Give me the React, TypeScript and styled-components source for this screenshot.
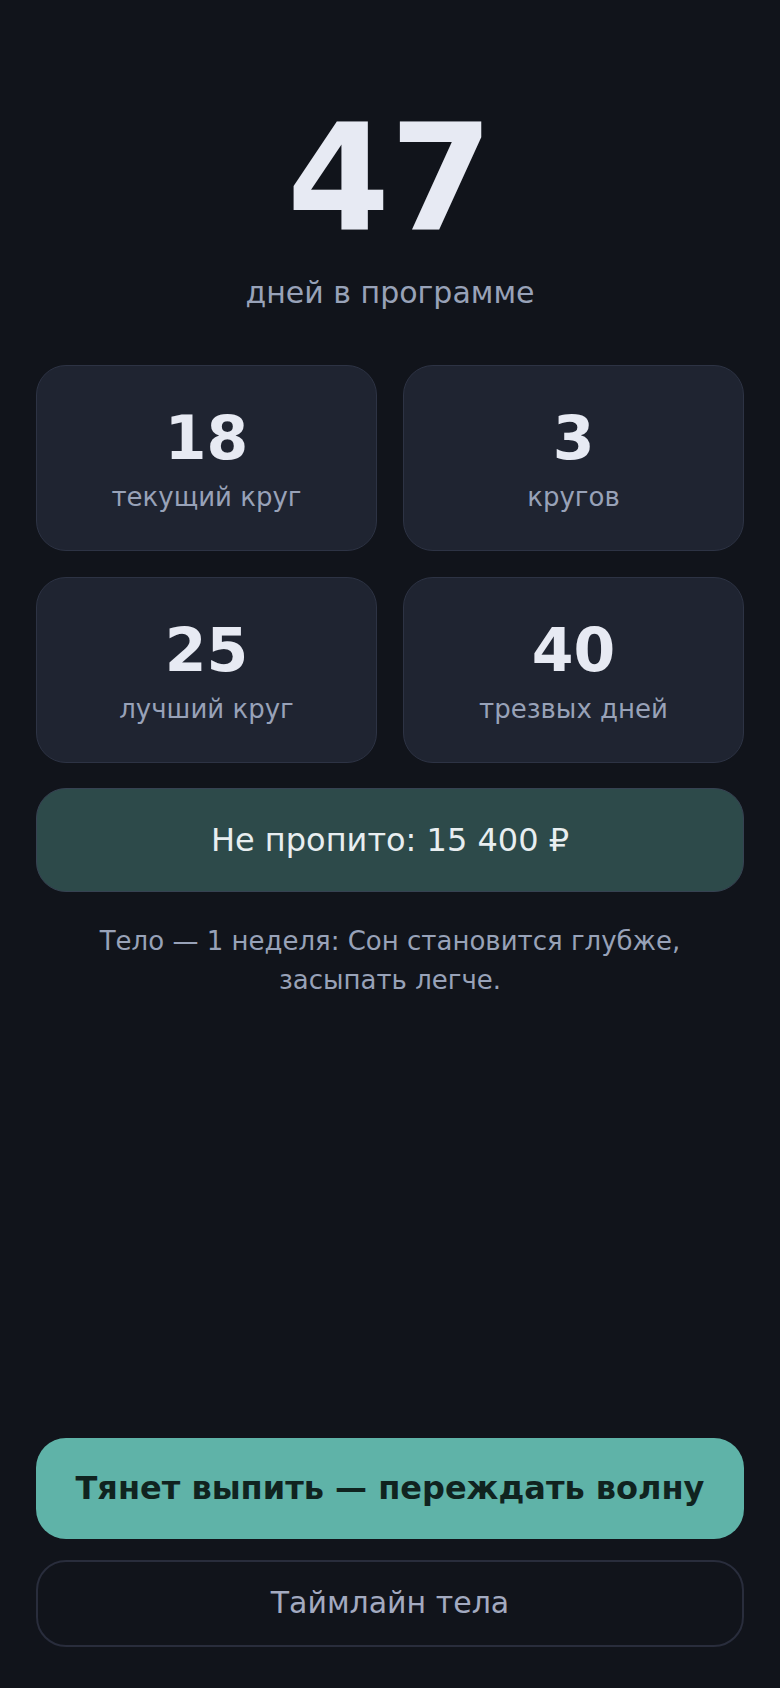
import React from "react";
import styled, { createGlobalStyle } from "styled-components";

const GlobalStyle = createGlobalStyle`
  html, body {
    margin: 0;
    padding: 0;
    background: #11141b;
  }
  body {
    font-family: "DejaVu Sans", "Noto Sans", sans-serif;
    -webkit-font-smoothing: antialiased;
  }
  * { box-sizing: border-box; }
`;

const Page = styled.main`
  min-height: 100vh;
  display: flex;
  flex-direction: column;
  padding: 105px 36px 41px;
  background: #11141b;
  color: #e7eaf3;
`;

const Hero = styled.section`
  display: flex;
  flex-direction: column;
  align-items: center;
  gap: 22px;
`;

const BigNumber = styled.div`
  font-size: 148px;
  font-weight: 700;
  line-height: 1;
  color: #e7eaf3;
`;

const Subtitle = styled.div`
  font-size: 30px;
  line-height: 1.2;
  color: #98a2b8;
`;

const StatsGrid = styled.section`
  margin-top: 54px;
  display: grid;
  grid-template-columns: 1fr 1fr;
  gap: 26px;
`;

const StatCard = styled.div`
  display: flex;
  flex-direction: column;
  align-items: center;
  gap: 14px;
  padding: 42px 16px 37px;
  background: #1f2431;
  border: 1px solid #2d3344;
  border-radius: 30px;
`;

const StatValue = styled.div`
  font-size: 60px;
  font-weight: 700;
  line-height: 1;
  color: #e7eaf3;
`;

const StatLabel = styled.div`
  font-size: 26px;
  line-height: 1.2;
  color: #98a2b8;
`;

const SavedBox = styled.div`
  margin-top: 25px;
  padding: 32px 16px 31px;
  background: #2d4a4a;
  border: 1px solid #364252;
  border-radius: 30px;
  text-align: center;
  font-size: 32px;
  line-height: 1.2;
  color: #e8eef0;
`;

const Note = styled.p`
  margin: 30px 20px 0;
  text-align: center;
  font-size: 26px;
  line-height: 1.5;
  color: #98a2b8;
`;

const Actions = styled.footer`
  margin-top: auto;
  display: flex;
  flex-direction: column;
  gap: 21px;
`;

const Button = styled.button<{ $primary?: boolean }>`
  display: block;
  width: 100%;
  font-family: "DejaVu Sans", "Noto Sans", sans-serif;
  line-height: 1.2;
  text-align: center;
  cursor: pointer;
  border-radius: 30px;
  ${({ $primary }) =>
    $primary
      ? `
    padding: 31px 12px 32px;
    font-size: 32px;
    font-weight: 700;
    color: #10231f;
    background: #5fb3a8;
    border: none;
  `
      : `
    padding: 23px 16px 24px;
    font-size: 30px;
    font-weight: 400;
    color: #a3aac0;
    background: transparent;
    border: 2px solid #292d3c;
  `}
`;

const stats = [
  { value: "18", label: "текущий круг" },
  { value: "3", label: "кругов" },
  { value: "25", label: "лучший круг" },
  { value: "40", label: "трезвых дней" },
];

export default function App() {
  return (
    <>
      <GlobalStyle />
      <Page>
        <Hero>
          <BigNumber>47</BigNumber>
          <Subtitle>дней в программе</Subtitle>
        </Hero>
        <StatsGrid>
          {stats.map((s) => (
            <StatCard key={s.label}>
              <StatValue>{s.value}</StatValue>
              <StatLabel>{s.label}</StatLabel>
            </StatCard>
          ))}
        </StatsGrid>
        <SavedBox>Не пропито: 15 400 ₽</SavedBox>
        <Note>Тело — 1 неделя: Сон становится глубже, засыпать легче.</Note>
        <Actions>
          <Button $primary>Тянет выпить — переждать волну</Button>
          <Button>Таймлайн тела</Button>
        </Actions>
      </Page>
    </>
  );
}
